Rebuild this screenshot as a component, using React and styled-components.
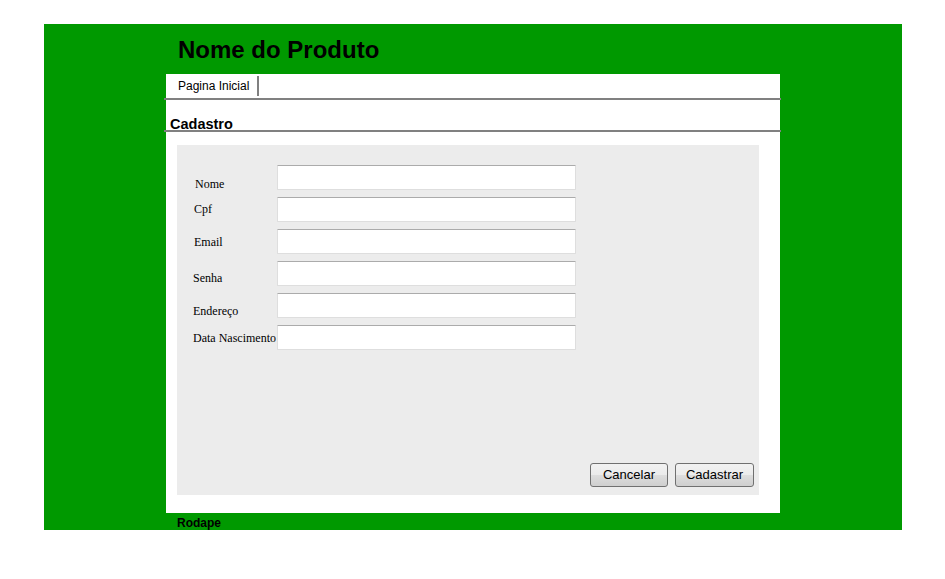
import React from "react";
import styled, { createGlobalStyle } from "styled-components";

const Global = createGlobalStyle`
  html, body { margin: 0; padding: 0; background: #fff; }
  body { font-family: "Liberation Sans", Arial, sans-serif; }
`;

const Page = styled.div`
  padding: 24px 43px 0 44px;
`;

const Frame = styled.div`
  width: 858px;
  height: 506px;
  background: #009900;
  display: flex;
  flex-direction: column;
  padding-left: 122px;
  box-sizing: border-box;
`;

const Header = styled.header`
  height: 50px;
  padding: 14px 0 0 12px;
  box-sizing: border-box;
  font: bold 24px/24px "Liberation Sans", Arial, sans-serif;
  color: #000;
`;

const Panel = styled.main`
  width: 614px;
  height: 439px;
  background: #fff;
  display: flex;
  flex-direction: column;
`;

const Nav = styled.nav`
  display: flex;
  height: 24px;
  padding-top: 2px;
  box-sizing: border-box;
`;

const NavItem = styled.a`
  display: block;
  height: 20px;
  padding: 2px 8px 0 12px;
  box-sizing: border-box;
  border-right: 2px solid #808080;
  font: 12px/16px "Comic Sans MS", "Liberation Sans", sans-serif;
  color: #000;
  text-decoration: none;
`;

const Rule = styled.div`
  height: 2px;
  background: #808080;
  margin: 0 -1px 0 -2px;
`;

const Title = styled.h2`
  margin: 0;
  height: 30px;
  padding: 17px 0 0 4px;
  box-sizing: border-box;
  font: bold 14.5px/14px "Liberation Sans", Arial, sans-serif;
  color: #000;
`;

const FormBox = styled.form`
  margin: 13px 21px 0 11px;
  height: 350px;
  background: #ececec;
  display: flex;
  flex-direction: column;
  justify-content: space-between;
  padding: 20px 5px 8px 16px;
  box-sizing: border-box;
`;

const Fields = styled.div`
  display: flex;
  flex-direction: column;
  gap: 7px;
`;

const Row = styled.div`
  display: grid;
  grid-template-columns: 84px 299px;
  height: 25px;
`;

const Label = styled.label`
  padding-top: ${(p) => p.$drop}px;
  padding-left: ${(p) => p.$indent}px;
  font: 12px/14px "Liberation Serif", "Times New Roman", serif;
  color: #000;
  white-space: nowrap;
`;

const Input = styled.input`
  width: 299px;
  height: 25px;
  box-sizing: border-box;
  margin: 0;
  border: 1px solid #dedede;
  border-top-color: #ababab;
  border-radius: 1px;
  background: #fff;
  outline: none;
`;

const Actions = styled.div`
  display: flex;
  justify-content: flex-end;
  gap: 7px;
`;

const Button = styled.button`
  width: ${(p) => p.$w}px;
  height: 24px;
  padding: 0;
  border: 1px solid #707070;
  border-radius: 3px;
  background: linear-gradient(#f2f2f2 0%, #ebebeb 50%, #dddddd 51%, #cfcfcf 100%);
  font: 13px/20px "Liberation Sans", Arial, sans-serif;
  color: #000;
`;

const Footer = styled.footer`
  padding: 4px 0 0 11px;
  font: bold 12px/13px "Liberation Sans", Arial, sans-serif;
  color: #000;
`;

const fields = [
  { label: "Nome", drop: 12, indent: 2 },
  { label: "Cpf", drop: 5, indent: 1 },
  { label: "Email", drop: 6, indent: 1 },
  { label: "Senha", drop: 10, indent: 0 },
  { label: "Endereço", drop: 11, indent: 0 },
  { label: "Data Nascimento", drop: 6, indent: 0 },
];

export default function App() {
  return (
    <>
      <Global />
      <Page>
        <Frame>
          <Header>Nome do Produto</Header>
          <Panel>
            <Nav>
              <NavItem href="#">Pagina Inicial</NavItem>
            </Nav>
            <Rule />
            <Title>Cadastro</Title>
            <Rule />
            <FormBox onSubmit={(e) => e.preventDefault()}>
              <Fields>
                {fields.map((f) => (
                  <Row key={f.label}>
                    <Label $drop={f.drop} $indent={f.indent}>{f.label}</Label>
                    <Input type="text" />
                  </Row>
                ))}
              </Fields>
              <Actions>
                <Button type="button" $w={78}>Cancelar</Button>
                <Button type="submit" $w={79}>Cadastrar</Button>
              </Actions>
            </FormBox>
          </Panel>
          <Footer>Rodape</Footer>
        </Frame>
      </Page>
    </>
  );
}
